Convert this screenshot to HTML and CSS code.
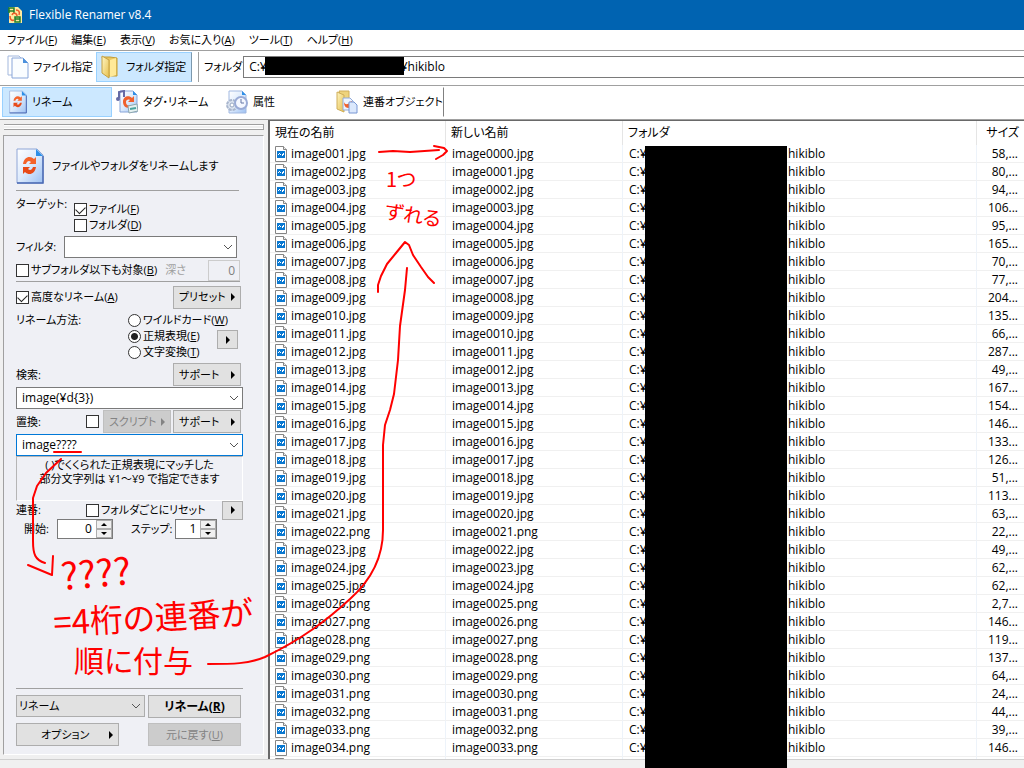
FILE: index.html
```html
<!DOCTYPE html>
<html lang="ja">
<head>
  <meta charset="UTF-8">
  <title>Flexible Renamer v8.4</title>
  <link rel="stylesheet" href="styles.css">
</head>
<body>

  <svg class="defs" aria-hidden="true">
    <defs>
      <linearGradient id="paper" x1="0" y1="0" x2="1" y2="1">
        <stop offset="0" stop-color="#ffffff"/>
        <stop offset="0.5" stop-color="#dceafc"/>
        <stop offset="1" stop-color="#9cc0f2"/>
      </linearGradient>
      <linearGradient id="yellow" x1="0" y1="0" x2="1" y2="1">
        <stop offset="0" stop-color="#fff6c4"/>
        <stop offset="1" stop-color="#e6bf4c"/>
      </linearGradient>
    </defs>
    <symbol id="renameDoc" viewBox="0 0 28 36">
      <path d="M1 1h20l6 6v28H1z" fill="url(#paper)" stroke="#8fa6d6"/>
      <path d="M27 8v27H1" fill="none" stroke="#4a69b4" stroke-width="1.500"/>
      <path d="M20 1l7 7h-7z" fill="#2d8fe8"/>
      <path d="M7 16c1-7 7-9 11-5l2-2v7h-7l2-2c-2-2-4-1-5 2z" fill="#f4622a"/>
      <path d="M20 19c-1 7-7 9-11 5l-2 2v-7h7l-2 2c2 2 4 1 5-2z" fill="#e84a18"/>
    </symbol>
    <symbol id="fileIcon" viewBox="0 0 12 16">
      <path d="M.5.5h8l3 3v12H.5z" fill="#fff" stroke="#858585"/>
      <path d="M8.500 .5v3h3" fill="#eee" stroke="#858585"/>
      <path d="M2 5h8v7H2z" fill="#0a78d0"/>
      <path d="M3 9V8h1V7h1v1h1v1h1V8h1V7h1v2H8v1H7V9H5V8H4v1z" fill="#fff"/>
    </symbol>
  </svg>

  <header class="titlebar">
    <svg class="app-icon" viewBox="0 0 14 16">
      <path d="M1 0h9l4 4v12H1z" fill="#ffe9a0"/>
      <path d="M1 6V1h5v5M1 4h5M7 15v-5h5v5zM7 12h5" fill="none" stroke="#23802b" stroke-width="1.500"/>
      <path d="M2 9c0 4 2 5 4 4M8 3c3 0 4 2 3 5M4 8c1-3 5-2 5 1" fill="none" stroke="#ef5a28" stroke-width="1.500"/>
    </svg>
    <span>Flexible Renamer v8.4</span>
  </header>

  <nav class="menubar">
    <a href="#">ファイル(<u>F</u>)</a>
    <a href="#">編集(<u>E</u>)</a>
    <a href="#">表示(<u>V</u>)</a>
    <a href="#">お気に入り(<u>A</u>)</a>
    <a href="#">ツール(<u>T</u>)</a>
    <a href="#">ヘルプ(<u>H</u>)</a>
  </nav>

  <div class="toolbar">
    <button class="tool tool-file">
      <svg width="22" height="24" viewBox="0 0 22 24">
        <path d="M1 1h11l4 4v15H1z" fill="#fff" stroke="#a3b8dd"/>
        <path d="M5 3h11l5 5v15H5z" fill="#fafdff" stroke="#89a6d9"/>
        <path d="M16 3l5 5h-5z" fill="#4b91dd"/>
      </svg>
      ファイル指定
    </button>
    <button class="tool tool-folder active">
      <svg width="20" height="24" viewBox="0 0 20 24">
        <path d="M2 2h8l7 1v18H8z" fill="#e9c660" stroke="#c29c35"/>
        <path d="M2 1l7 4v18l-7-5z" fill="url(#yellow)" stroke="#c6a143"/>
        <path d="M10 5l6-2v17l-6 2z" fill="#ffe998"/>
      </svg>
      フォルダ指定
    </button>
    <label class="path-label" for="path">フォルダ</label>
    <div class="path-box">
      <input id="path" type="text" value="C:¥&nbsp;&nbsp;&nbsp;&nbsp;&nbsp;&nbsp;&nbsp;&nbsp;&nbsp;&nbsp;&nbsp;&nbsp;&nbsp;&nbsp;&nbsp;&nbsp;&nbsp;&nbsp;&nbsp;&nbsp;&nbsp;&nbsp;&nbsp;&nbsp;&nbsp;&nbsp;&nbsp;&nbsp;&nbsp;&nbsp;&nbsp;&nbsp;&nbsp;&nbsp;&nbsp;&nbsp;&nbsp;&nbsp;&nbsp;&nbsp;&nbsp;&nbsp;&nbsp;¥hikiblo">
      <span class="path-mask"></span>
    </div>
  </div>

  <div class="toolbar modes">
    <button class="tool mode active">
      <svg width="18" height="24"><use href="#renameDoc"/></svg>
      リネーム
    </button>
    <button class="tool mode">
      <svg width="22" height="24" viewBox="0 0 22 24">
        <path d="M4 1h13l4 4v17H4z" fill="url(#paper)" stroke="#87a4d8"/>
        <path d="M17 1l4 4h-4z" fill="#2d8fe8"/>
        <path d="M7 12c0-6 6-7 9-4l2-2v6h-6l2-2c-2-1-4 0-4 2 0 3 2 4 4 3l-1 3c-4 0-6-3-6-6z" fill="#f0602c"/>
        <path d="M3 8V2l5-1v6" fill="none" stroke="#656aa5" stroke-width="2"/>
        <circle cx="2" cy="9" r="2" fill="#656aa5"/>
        <path d="M12 16l9-2 1 7-9 2z" fill="#e5f1f2" stroke="#8ba6ad"/>
        <path d="M14 19l6-1" stroke="#49a4a0" stroke-width="2"/>
      </svg>
      タグ・リネーム
    </button>
    <button class="tool mode">
      <svg width="22" height="24" viewBox="0 0 22 24">
        <path d="M3 1h13l4 4v18H3z" fill="url(#paper)" stroke="#a2b9e1"/>
        <path d="M16 1l4 4h-4z" fill="#2d8fe8"/>
        <circle cx="6" cy="15" r="5" fill="#dce4f0" stroke="#a9b6cd" stroke-width="2" stroke-dasharray="3 1"/>
        <circle cx="6" cy="15" r="2" fill="#fff" stroke="#97a7c2"/>
        <circle cx="15" cy="13" r="6" fill="#f4f7ff" stroke="#9aabd6" stroke-width="2"/>
        <path d="M15 9v4h3" fill="none" stroke="#6476a5"/>
      </svg>
      属性
    </button>
    <button class="tool mode mode-last">
      <svg width="22" height="24" viewBox="0 0 22 24">
        <path d="M3 1h10v17H8z" fill="#eed37c" stroke="#d0ae58"/>
        <path d="M1 2l7 3v17l-7-3z" fill="url(#yellow)" stroke="#d0ae58"/>
        <path d="M7 8h7l3 3v9H7z" fill="#edf4ff" stroke="#92abd9"/>
        <path d="M8 12c1 3 4 3 6 0l2-1-1 6c-3 2-7 1-7-5z" fill="#f0602c"/>
        <path d="M13 12h5l3 3v8h-8z" fill="#dbe8fc" stroke="#7897d4"/>
      </svg>
      連番オブジェクト
    </button>
  </div>

  <main class="workspace">
    <aside class="sidebar">
      <div class="grip"></div>
      <form class="panel">
        <div class="heading">
          <svg width="28" height="36"><use href="#renameDoc"/></svg>
          <span>ファイルやフォルダをリネームします</span>
        </div>

        <div class="row targets">
          <span class="caption">ターゲット:</span>
          <div class="stack">
            <label><input type="checkbox" checked>ファイル(<u>F</u>)</label>
            <label><input type="checkbox">フォルダ(<u>D</u>)</label>
          </div>
        </div>
        <div class="row filter">
          <label class="caption" for="filter">フィルタ:</label>
          <div class="combo">
            <select id="filter"><option></option></select>
            <svg class="chevron" viewBox="0 0 10 6"><path d="M1 1l4 4 4-4"/></svg>
          </div>
        </div>
        <div class="row subfolders">
          <label><input type="checkbox">サブフォルダ以下も対象(<u>B</u>)</label>
          <label class="dim" for="depth">深さ</label>
          <input id="depth" class="depth" type="text" value="0" disabled>
        </div>

        <div class="row advanced">
          <label><input type="checkbox" checked>高度なリネーム(<u>A</u>)</label>
          <button type="button" class="btn drop">プリセット<i class="arrow"></i></button>
        </div>
        <div class="row methods">
          <span class="caption">リネーム方法:</span>
          <div class="stack">
            <label><input type="radio" name="method">ワイルドカード(<u>W</u>)</label>
            <label><input type="radio" name="method" checked>正規表現(<u>E</u>)</label>
            <label><input type="radio" name="method">文字変換(<u>T</u>)</label>
          </div>
          <button type="button" class="btn mini" aria-label="正規表現"><i class="arrow"></i></button>
        </div>

        <div class="row field-head">
          <label for="search">検索:</label>
          <button type="button" class="btn drop">サポート<i class="arrow"></i></button>
        </div>
        <div class="combo">
          <select id="search"><option>image(¥d{3})</option></select>
          <svg class="chevron" viewBox="0 0 10 6"><path d="M1 1l4 4 4-4"/></svg>
        </div>
        <div class="row field-head replace-head">
          <label for="replace">置換:</label>
          <input type="checkbox" aria-label="スクリプト">
          <button type="button" class="btn drop" disabled>スクリプト<i class="arrow"></i></button>
          <button type="button" class="btn drop">サポート<i class="arrow"></i></button>
        </div>
        <div class="combo focused">
          <select id="replace"><option>image????</option></select>
          <svg class="chevron" viewBox="0 0 10 6"><path d="M1 1l4 4 4-4"/></svg>
        </div>
        <p class="hint">( )でくくられた正規表現にマッチした<br>部分文字列は ¥1～¥9 で指定できます</p>

        <div class="row serial">
          <span class="caption">連番:</span>
          <label><input type="checkbox">フォルダごとにリセット</label>
          <button type="button" class="btn mini" aria-label="連番"><i class="arrow"></i></button>
        </div>
        <div class="row counters">
          <label for="start">開始:</label>
          <span class="spin">
            <input id="start" type="text" value="0">
            <span class="spin-buttons">
              <button type="button" aria-label="増やす"><i class="up"></i></button>
              <button type="button" aria-label="減らす"><i class="down"></i></button>
            </span>
          </span>
          <label class="step-label" for="step">ステップ:</label>
          <span class="spin step">
            <input id="step" type="text" value="1">
            <span class="spin-buttons">
              <button type="button" aria-label="増やす"><i class="up"></i></button>
              <button type="button" aria-label="減らす"><i class="down"></i></button>
            </span>
          </span>
        </div>

        <div class="actions">
          <div class="combo flat">
            <select aria-label="操作"><option>リネーム</option></select>
            <svg class="chevron" viewBox="0 0 10 6"><path d="M1 1l4 4 4-4"/></svg>
          </div>
          <button type="button" class="btn primary">リネーム(<u>R</u>)</button>
          <button type="button" class="btn option">オプション<i class="arrow"></i></button>
          <button type="button" class="btn" disabled>元に戻す(<u>U</u>)</button>
        </div>
      </form>
    </aside>

    <section class="list">
      <table>
        <colgroup>
          <col class="col-name">
          <col class="col-new">
          <col class="col-folder">
          <col>
        </colgroup>
        <thead>
          <tr><th>現在の名前</th><th>新しい名前</th><th>フォルダ</th><th class="size">サイズ</th></tr>
        </thead>
        <tbody id="fileRows"></tbody>
      </table>
    </section>
  </main>

  <footer class="statusbar"></footer>

  <div class="folder-mask"></div>

  <!-- red pen notes -->
  <svg class="notes" width="1024" height="768" viewBox="0 0 1024 768">
    <g class="pen">
      <path d="M379 152l14-1 17 1 29-2M434 146l10 2 3 3-4 4-7 4"/>
      <path d="M378 292v-7l3-9 6-12 9-11 9-11 4 3 4 10 8 12 7 10 6 6"/>
      <path d="M407 268l-2 22-5 36-2 34-4 34-4 16-5 15-2 20v85c0 30-14 52-33 69-24 22-48 40-85 58-17 7-32 7-57 7"/>
      <path d="M61 459l-15 14-9 13-4 12v43c0 13 2 19 12 22M28 565l24 10 1-19"/>
      <path d="M54 452h27"/>
    </g>
    <text class="marks" x="62" y="590" transform="rotate(-5 62 590)">????</text>
    <text class="memo" x="54" y="635" transform="rotate(-3 54 635)">=4桁の連番が</text>
    <text class="memo second" x="74" y="672">順に付与</text>
    <text class="small-memo" x="386" y="187">1つ</text>
    <text class="small-memo" x="384" y="218" transform="rotate(9 384 218)">ずれる</text>
  </svg>

  <script src="script.js"></script>
</body>
</html>
```

FILE: styles.css
```css
* {
  box-sizing: border-box;
}

body {
  margin: 0;
  height: 100vh;
  display: flex;
  flex-direction: column;
  overflow: hidden;
  position: relative;
  background-color: #f0f0f0;
  color: #000;
  font-family: "Open Sans", "Noto Sans CJK JP", sans-serif;
  font-size: 12px;
  line-height: 16px;
  font-feature-settings: "palt";
  white-space: nowrap;
}

button, input, select {
  font: inherit;
  font-feature-settings: inherit;
  color: inherit;
  margin: 0;
  border-radius: 0;
}

.defs {
  position: absolute;
  width: 0;
  height: 0;
}

.titlebar {
  height: 30px;
  flex: none;
  display: flex;
  align-items: center;
  gap: 7px;
  padding-left: 8px;
  background-color: #0063b1;
  color: #fff;
}

.app-icon {
  width: 14px;
  height: 16px;
}

.menubar {
  height: 20px;
  flex: none;
  display: flex;
  align-items: center;
  gap: 14px;
  padding-left: 7px;
  background-color: #fff;
  font-size: 11px;
}

.menubar a {
  color: #000;
  text-decoration: none;
}

.toolbar {
  height: 35px;
  flex: none;
  display: flex;
  align-items: center;
  padding-bottom: 2px;
  border-top: 1px solid #a0a0a0;
  background-color: #fff;
  font-size: 11px;
}

.modes {
  height: 34px;
}

.tool {
  height: 30px;
  display: flex;
  align-items: center;
  gap: 4px;
  padding: 0 0 0 6px;
  border: 1px solid transparent;
  background: none;
}

.tool svg {
  flex: none;
}

.tool-file {
  width: 96px;
}

.tool-folder {
  width: 96px;
  gap: 6px;
  padding-left: 3px;
}

.tool.active {
  background-color: #cce8ff;
  border-color: #99d1ff;
}

.tool-folder.active {
  border-right-color: #7c98ad;
}

.path-label {
  margin-left: 6px;
  padding: 0 1px 0 5px;
  line-height: 30px;
  border-left: 1px solid #a0a0a0;
}

.path-box {
  position: relative;
  flex: 1;
  font-size: 12px;
}

.path-box input {
  width: 100%;
  height: 22px;
  display: block;
  padding: 0 5px 2px;
  border: 1px solid #7a7a7a;
  border-right: 0;
  background-color: #fff;
}

.path-mask {
  position: absolute;
  left: 22px;
  top: 1px;
  width: 139px;
  height: 18px;
  background-color: #000;
}

.mode {
  width: 110px;
}

.mode:first-child {
  margin-left: 2px;
  gap: 5px;
}

.mode + .mode {
  gap: 5px;
  padding-left: 3px;
}

.mode.mode-last {
  width: 112px;
  border-right-color: #808080;
}

.workspace {
  flex: 1;
  min-height: 0;
  display: flex;
  border-top: 1px solid #a0a0a0;
}

.sidebar {
  width: 268px;
  flex: none;
  display: flex;
  flex-direction: column;
  padding: 4px 4px 4px 3px;
  font-size: 11px;
}

.grip {
  height: 6px;
  margin: 0 0 5px 1px;
  border: 1px solid #a0a0a0;
  border-left: 0;
  box-shadow: inset 0 1px #fff, inset 0 -1px #fff;
}

.panel {
  flex: 1;
  min-height: 0;
  display: flex;
  flex-direction: column;
  padding: 0 20px 8px 12px;
  border: 1px solid #a0a0a0;
  border-right-color: #fff;
  border-bottom-color: #fff;
  background-color: #eff0f5;
}

.heading {
  height: 55px;
  flex: none;
  display: flex;
  align-items: center;
  gap: 8px;
  padding-top: 5px;
  margin-right: 4px;
  border-bottom: 1px solid #a0a0a0;
}

.row {
  flex: none;
  display: flex;
  align-items: center;
}

.row label {
  display: flex;
  align-items: center;
}

.caption {
  flex: none;
}

.stack {
  display: flex;
  flex-direction: column;
}

input[type="checkbox"],
input[type="radio"] {
  appearance: none;
  width: 13px;
  height: 13px;
  flex: none;
  margin-right: 2px;
  border: 1px solid #333;
  background-color: #fff;
}

input[type="checkbox"]:checked {
  display: flex;
  align-items: flex-start;
}

input[type="checkbox"]:checked::after {
  content: "";
  width: 9px;
  height: 5px;
  margin: 2px 1px;
  border-left: 1px solid #222;
  border-bottom: 1px solid #222;
  transform: rotate(-45deg);
}

input[type="radio"] {
  border-radius: 50%;
}

input[type="radio"]:checked {
  background: radial-gradient(circle, #222 0 3px, #fff 4px);
}

.targets {
  height: 44px;
  align-items: flex-start;
  padding-top: 5px;
}

.targets .caption {
  width: 58px;
}

.targets .stack {
  padding-top: 5px;
}

.filter {
  height: 24px;
}

.filter .caption {
  width: 48px;
}

.filter .combo {
  flex: 1;
  margin-right: 6px;
}

.subfolders {
  height: 23px;
  margin-right: 3px;
  border-bottom: 1px solid #a0a0a0;
}

.subfolders .dim {
  color: #a0a0a0;
  margin-left: 8px;
}

.depth {
  width: 32px;
  height: 21px;
  margin-left: auto;
  padding: 0 4px;
  font-size: 12px;
  text-align: right;
  border: 1px solid #ccc;
  background-color: #eff0f5;
}

.depth:disabled {
  color: #808080;
}

.combo {
  position: relative;
  height: 22px;
  flex: none;
}

.combo select {
  appearance: none;
  width: 100%;
  height: 100%;
  padding: 0 20px 0 5px;
  font-size: 12px;
  border: 1px solid #7a7a7a;
  background-color: #fff;
}

.combo.focused select {
  border-color: #0078d7;
}

.combo.flat select {
  padding-left: 2px;
  font-size: 11px;
  border-color: #adadad;
  background-color: #e1e1e1;
}

.chevron {
  position: absolute;
  right: 4px;
  top: 8px;
  width: 10px;
  height: 6px;
  fill: none;
  stroke: #555;
  pointer-events: none;
}

.btn {
  height: 23px;
  flex: none;
  display: flex;
  align-items: center;
  justify-content: center;
  padding: 0 5px;
  border: 1px solid #adadad;
  background-color: #e1e1e1;
}

.btn:disabled {
  color: #838383;
  background-color: #ccc;
  border-color: #bfbfbf;
}

.drop {
  width: 68px;
  justify-content: space-between;
}

.mini {
  width: 21px;
  height: 19px;
  padding: 0;
}

.arrow {
  border: 4px solid transparent;
  border-left-color: currentColor;
  border-right: 0;
}

.advanced {
  height: 30px;
  justify-content: space-between;
  padding: 0 2px 0 0;
}

.methods {
  height: 50px;
  align-items: flex-start;
}

.methods .caption {
  width: 112px;
}

.methods .stack {
  width: 84px;
}

.methods .mini {
  margin: 18px 5px 0 auto;
}

.field-head {
  height: 25px;
  justify-content: space-between;
  padding-right: 2px;
}

.replace-head {
  gap: 2px;
  justify-content: flex-start;
}

.replace-head label {
  margin-right: auto;
}

.hint {
  height: 45px;
  flex: none;
  margin: 0;
  padding-top: 1px;
  line-height: 14px;
  text-align: center;
  border: 1px solid #b5b5b5;
  border-right-color: #fff;
  border-bottom-color: #fff;
}

.serial {
  height: 18px;
}

.serial .caption {
  width: 70px;
}

.serial .mini {
  margin-left: auto;
}

.counters {
  height: 20px;
  padding-left: 8px;
}

.spin {
  height: 20px;
  display: flex;
  margin-left: 8px;
  border: 1px solid #7a7a7a;
  background-color: #fff;
}

.spin input {
  width: 38px;
  padding: 0 4px;
  font-size: 12px;
  text-align: right;
  border: 0;
  background: none;
}

.spin.step {
  margin-left: 3px;
}

.spin.step input {
  width: 24px;
}

.spin-buttons {
  display: flex;
  flex-direction: column;
}

.spin-buttons button {
  width: 16px;
  flex: 1;
  display: flex;
  align-items: center;
  justify-content: center;
  padding: 0;
  border: 1px solid #adadad;
  background-color: #f0f0f0;
}

.up, .down {
  border: 3px solid transparent;
}

.up {
  border-top: 0;
  border-bottom-color: #000;
}

.down {
  border-bottom: 0;
  border-top-color: #000;
}

.step-label {
  margin-left: 18px;
}

.actions {
  display: grid;
  grid-template-columns: 129px 93px;
  gap: 5px 3px;
  margin-top: auto;
  padding-top: 6px;
  border-top: 1px solid #a0a0a0;
}

.primary {
  font-size: 12px;
  font-weight: bold;
}

.option {
  width: 103px;
  justify-content: space-between;
  padding-left: 24px;
}

.list {
  flex: 1;
  min-width: 0;
  overflow: hidden;
  background-color: #fff;
  border-top: 1px solid #696969;
  border-left: 2px solid #696969;
}

table {
  width: 100%;
  table-layout: fixed;
  border-collapse: separate;
  border-spacing: 0;
}

.col-name {
  width: 176px;
}

.col-new {
  width: 177px;
}

.col-folder {
  width: 354px;
}

th {
  height: 24px;
  padding: 0 5px;
  text-align: left;
  font-weight: normal;
  border-right: 1px solid #e5e5e5;
}

td {
  height: 18px;
  padding: 0 6px;
  line-height: 16px;
  border-right: 1px solid #edf3fa;
  border-bottom: 1px solid #f0f0f0;
}

td:first-child {
  display: flex;
  align-items: center;
  gap: 4px;
  padding-left: 5px;
}

th:last-child, td:last-child {
  border-right: 0;
}

.size {
  text-align: right;
}

.file-icon {
  width: 12px;
  height: 16px;
}

.drive {
  display: inline-block;
  width: 159px;
}

.statusbar {
  height: 9px;
  flex: none;
  border-top: 1px solid #d0d0d0;
}

.folder-mask {
  position: absolute;
  left: 645px;
  top: 146px;
  bottom: 0;
  width: 142px;
  background-color: #000;
}

.notes {
  position: absolute;
  left: 0;
  top: 0;
  pointer-events: none;
}

.pen {
  fill: none;
  stroke: #f00;
  stroke-width: 2;
  stroke-linecap: round;
  stroke-linejoin: round;
}

.marks, .memo, .small-memo {
  fill: #f00;
  font-family: "Noto Sans CJK JP", sans-serif;
}

.marks {
  font-size: 37px;
}

.memo {
  font-size: 33px;
}

.memo.second {
  font-size: 30px;
}

.small-memo {
  font-size: 20px;
}
```

FILE: script.js
```js
const fileRows = document.getElementById('fileRows');

const sizes = [
  '58,...', '80,...', '94,...', '106...', '95,...', '165...', '70,...', '77,...', '204...', '135...',
  '66,...', '287...', '49,...', '167...', '154...', '146...', '133...', '126...', '51,...', '113...',
  '63,...', '22,...', '49,...', '62,...', '62,...', '2,7...', '146...', '119...', '137...', '64,...',
  '24,...', '44,...', '39,...', '146...'
];

const icon = '<svg class="file-icon"><use href="#fileIcon"/></svg>';

sizes.forEach((size, i) => {
  const number = i + 1;
  const ext = number === 22 || number > 25 ? 'png' : 'jpg';
  const oldName = `image${String(number).padStart(3, '0')}.${ext}`;
  const newName = `image${String(i).padStart(4, '0')}.${ext}`;

  const row = document.createElement('tr');
  row.innerHTML = `
    <td>${icon}${oldName}</td>
    <td>${newName}</td>
    <td><span class="drive">C:¥</span>hikiblo</td>
    <td class="size">${size}</td>`;
  fileRows.appendChild(row);
});

// next entry, still loading
const pending = document.createElement('tr');
pending.innerHTML = `<td>${icon}</td><td></td><td></td><td></td>`;
fileRows.appendChild(pending);
```
